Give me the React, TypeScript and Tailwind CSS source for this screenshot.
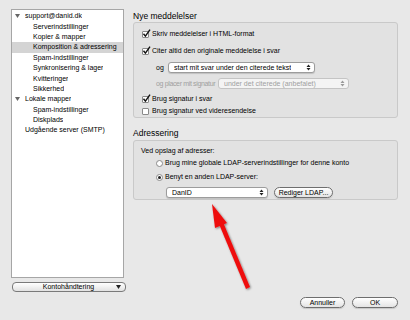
import React from "react";

const treeRows: { label: string; level: number; open?: boolean; selected?: boolean }[] = [
  { label: "support@danid.dk", level: 0, open: true },
  { label: "Serverindstillinger", level: 1 },
  { label: "Kopier & mapper", level: 1 },
  { label: "Komposition & adressering", level: 1, selected: true },
  { label: "Spam-indstillinger", level: 1 },
  { label: "Synkronisering & lager", level: 1 },
  { label: "Kvitteringer", level: 1 },
  { label: "Sikkerhed", level: 1 },
  { label: "Lokale mapper", level: 0, open: true },
  { label: "Spam-indstillinger", level: 1 },
  { label: "Diskplads", level: 1 },
  { label: "Udgående server (SMTP)", level: 0 },
];

const Checkbox = ({ checked }: { checked?: boolean }) => (
  <span className="relative w-[8px] h-[8px] shrink-0 mr-[2px]">
    <span className="absolute left-0 top-[1px] w-[7px] h-[7px] bg-white border border-[#8a8a8a] rounded-[1px]" />
    {checked && (
      <svg className="absolute left-0 top-[-1px]" width="9" height="9" viewBox="0 0 9 9">
        <path d="M1.5 4.8 L3.4 7.2 L8 0.6" fill="none" stroke="#111" strokeWidth="1.4" />
      </svg>
    )}
  </span>
);

const Radio = ({ checked }: { checked?: boolean }) => (
  <span className="w-[7px] h-[7px] shrink-0 mr-[2px] rounded-full bg-white border border-[#8a8a8a] flex items-center justify-center">
    {checked && <span className="w-[3px] h-[3px] rounded-full bg-[#222]" />}
  </span>
);

const UpDown = ({ dim }: { dim?: boolean }) => (
  <svg width="5" height="7" viewBox="0 0 5 7">
    <path d="M0.5 3 L2.5 0.5 L4.5 3 Z M0.5 4 L2.5 6.5 L4.5 4 Z" fill={dim ? "#9a9a9a" : "#222"} />
  </svg>
);

const Select = ({ label, width, dim }: { label: string; width: string; dim?: boolean }) => (
  <div
    className={`${width} h-[11px] shrink-0 flex items-center justify-between pl-[5px] pr-[3px] rounded-[3px] border ${
      dim ? "border-[#c4c4c4] text-[#a0a0a0] bg-[#f4f4f4]" : "border-[#9c9c9c] bg-white shadow-[0_1px_1px_rgba(0,0,0,0.15)]"
    }`}
  >
    <span className="truncate">{label}</span>
    <UpDown dim={dim} />
  </div>
);

const PillButton = ({ label, width }: { label: string; width: string }) => (
  <div
    className={`${width} h-[11px] flex items-center justify-center rounded-full border border-[#6e6e6e] bg-gradient-to-b from-white to-[#e4e4e4] shadow-[0_1px_1px_rgba(0,0,0,0.15)]`}
  >
    {label}
  </div>
);

export default function App() {
  return (
    <div
      className="relative w-[410px] h-[320px] bg-[#e8e8e8] text-[7px] leading-[10px] text-black whitespace-nowrap overflow-hidden"
      style={{ fontFamily: '"Liberation Sans", Arial, sans-serif' }}
    >
      <div className="flex">
        {/* Account tree */}
        <div className="w-[127px] pl-[11px] pt-[9px] flex flex-col">
          <div className="w-[113px] h-[269px] bg-white border border-[#a6a6a6] pt-[1px]">
            {treeRows.map((row, i) => (
              <div
                key={i}
                className={`h-[10.4px] flex items-center ${row.selected ? "bg-[#d4d4d4]" : ""}`}
                style={{ paddingLeft: row.level === 0 ? 3 : 21 }}
              >
                {row.level === 0 && (
                  <span className="w-[10px] shrink-0 flex">
                    {row.open && (
                      <svg width="5" height="4" viewBox="0 0 5 4">
                        <path d="M0 0 L5 0 L2.5 4 Z" fill="#666" />
                      </svg>
                    )}
                  </span>
                )}
                <span className="truncate">{row.label}</span>
              </div>
            ))}
          </div>
          <div className="mt-[4px] ml-[1px] w-[114px] h-[10px] flex items-center rounded-[4px] border border-[#7a7a7a] bg-gradient-to-b from-white to-[#e2e2e2]">
            <span className="flex-1 text-center pl-[8px]">Kontohåndtering</span>
            <svg className="mr-[4px]" width="5" height="4" viewBox="0 0 5 4">
              <path d="M0 0 L5 0 L2.5 4 Z" fill="#222" />
            </svg>
          </div>
        </div>

        {/* Settings */}
        <div className="ml-[6px] w-[265px] pt-[11px] flex flex-col">
          <div className="text-[8.5px] leading-[10px]">Nye meddelelser</div>
          <div className="mt-[1px] h-[96px] rounded-[3px] border border-[#c9c9c9] bg-[#e2e2e2] pl-[8px] pt-[6px] flex flex-col">
            <div className="h-[10px] flex items-center">
              <Checkbox checked />
              <span>Skriv meddelelser i HTML-format</span>
            </div>
            <div className="mt-[7px] h-[10px] flex items-center">
              <Checkbox checked />
              <span>Citer altid den originale meddelelse i svar</span>
            </div>
            <div className="mt-[6px] pl-[14px] flex items-center">
              <span className="w-[12px]">og</span>
              <Select label="start mit svar under den citerede tekst" width="w-[147px]" />
            </div>
            <div className="mt-[5px] pl-[14px] flex items-center text-[#a0a0a0]">
              <span className="w-[62px] tracking-[-0.35px]">og placer mit signatur</span>
              <Select label="under det citerede (anbefalet)" width="w-[131px]" dim />
            </div>
            <div className="mt-[5px] h-[10px] flex items-center">
              <Checkbox checked />
              <span>Brug signatur i svar</span>
            </div>
            <div className="mt-[2px] h-[10px] flex items-center">
              <Checkbox />
              <span>Brug signatur ved videresendelse</span>
            </div>
          </div>

          <div className="mt-[10px] text-[8.5px] leading-[10px]">Adressering</div>
          <div className="mt-[2px] h-[60px] rounded-[3px] border border-[#c9c9c9] bg-[#e2e2e2] pl-[7px] pt-[5px] flex flex-col">
            <div className="h-[10px]">Ved opslag af adresser:</div>
            <div className="mt-[2px] h-[10px] pl-[15px] flex items-center">
              <Radio />
              <span>Brug mine globale LDAP-serverindstillinger for denne konto</span>
            </div>
            <div className="mt-[4px] h-[10px] pl-[15px] flex items-center">
              <Radio checked />
              <span>Benyt en anden LDAP-server:</span>
            </div>
            <div className="mt-[5px] pl-[25px] flex items-center gap-[6px]">
              <Select label="DanID" width="w-[102px]" />
              <PillButton label="Rediger LDAP..." width="w-[59px]" />
            </div>
          </div>
        </div>
      </div>

      {/* Dialog buttons */}
      <div className="absolute left-[300px] top-[297px] flex gap-[7px]">
        <PillButton label="Annuller" width="w-[45px]" />
        <PillButton label="OK" width="w-[46px]" />
      </div>

      {/* Red annotation arrow */}
      <svg className="absolute left-0 top-0 pointer-events-none" width="410" height="320" viewBox="0 0 410 320">
        <defs>
          <filter id="sh" x="-20%" y="-20%" width="140%" height="140%">
            <feDropShadow dx="1" dy="1" stdDeviation="1" floodColor="#000" floodOpacity="0.45" />
          </filter>
        </defs>
        <g filter="url(#sh)" fill="#ee1111">
          <polygon points="212,204 215,228 227,223" />
          <polygon points="219,224 223,222 250,287 246,289" />
        </g>
      </svg>
    </div>
  );
}
